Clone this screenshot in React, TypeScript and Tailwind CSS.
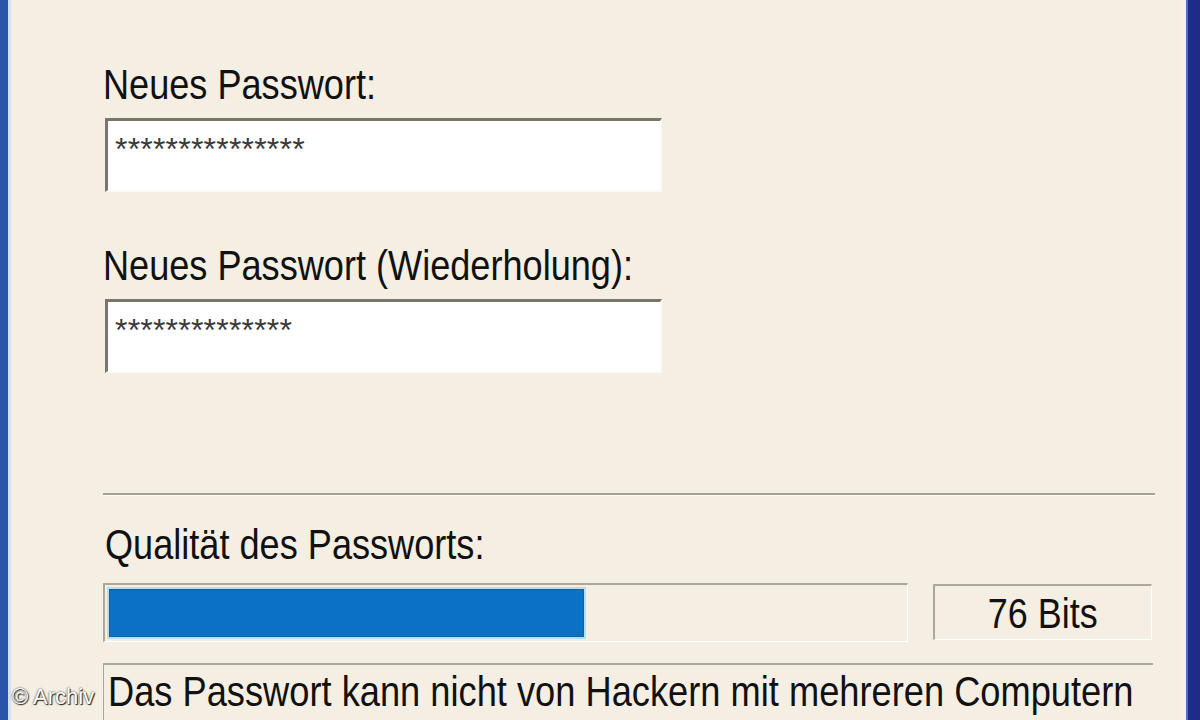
const font = { fontFamily: "'Liberation Sans', Arial, sans-serif" };

function Label({ children, className = '' }: { children: React.ReactNode; className?: string }) {
	return (
		<div className={`shrink-0 text-[43px] leading-[48px] whitespace-nowrap ${className}`}>
			<span className="inline-block origin-left scale-x-[0.84]">{children}</span>
		</div>
	);
}

function PasswordField({ value }: { value: string }) {
	return (
		<div className="shrink-0 ml-[2px] w-[557px] h-[74px] bg-white border-t-[3px] border-l-[3px] border-r-2 border-b-2 border-t-[#7a766b] border-l-[#7a766b] border-r-[#fbfaf6] border-b-[#fbfaf6] pl-[7px] pt-[12px]">
			<div className="text-[32px] leading-[32px] text-[#3a3a3a] tracking-[0.2px]">{value}</div>
		</div>
	);
}

export default function App() {
	const quality = 60;

	return (
		<div className="relative w-[1200px] h-[720px] overflow-hidden flex bg-[#f4eee3] text-[#111]" style={font}>
			<div className="w-[8px] bg-[#2a54aa]" />
			<div className="w-[3px] bg-[#d3e0ef]" />

			<div className="flex-1 flex flex-col pl-[92px] pr-[25px] pt-[60px]">
				<Label>Neues Passwort:</Label>
				<div className="mt-[10px] shrink-0">
					<PasswordField value="***************" />
				</div>

				<Label className="mt-[49px]">Neues Passwort (Wiederholung):</Label>
				<div className="mt-[10px] shrink-0">
					<PasswordField value="**************" />
				</div>

				<div className="shrink-0 mt-[120px] h-[2px] bg-[#a6a396]" />
				<div className="shrink-0 h-[1px] bg-[#fdfcf8]" />

				<Label className="mt-[24px] ml-[2px]">Qualität des Passworts:</Label>

				<div className="shrink-0 mt-[15px] flex items-start">
					<div className="w-[805px] h-[59px] border-t-2 border-l-2 border-r border-b border-t-[#aca899] border-l-[#aca899] border-r-[#ffffff] border-b-[#ffffff] p-[2px]">
						<div className="h-full border-2 border-[#b4def4]" style={{ width: `${quality}%` }}>
							<div className="h-full bg-[#0a72c6] border border-[#0963ad]" />
						</div>
					</div>
					<div className="ml-[25px] mt-[1px] w-[219px] h-[56px] border-t-2 border-l-2 border-r border-b border-t-[#aca899] border-l-[#aca899] border-r-[#ffffff] border-b-[#ffffff] pt-[3px] text-center text-[43px] leading-[48px] whitespace-nowrap">
						<span className="inline-block scale-x-[0.835]">76 Bits</span>
					</div>
				</div>

				<div className="shrink-0 mt-[21px] w-[1050px] h-[80px] border-t-2 border-l border-t-[#aca899] border-l-[#aca899] pl-[4px] pt-[2px] text-[43px] leading-[48px] whitespace-nowrap">
					<div>
						<span className="inline-block origin-left scale-x-[0.843]">
							Das Passwort kann nicht von Hackern mit mehreren Computern
						</span>
					</div>
					<div>
						<span className="inline-block origin-left scale-x-[0.843]">geknackt werden.</span>
					</div>
				</div>
			</div>

			<div className="w-[6px] bg-[#fbeee6]" />
			<div className="w-[14px] bg-[#1e2c85] border-l-2 border-l-[#4f6fc4]" />

			<div className="absolute left-[12px] top-[684px] text-[22px] leading-[26px] text-white [text-shadow:0_0_2px_#222,1px_1px_1px_#222]">
				© Archiv
			</div>
		</div>
	);
}
